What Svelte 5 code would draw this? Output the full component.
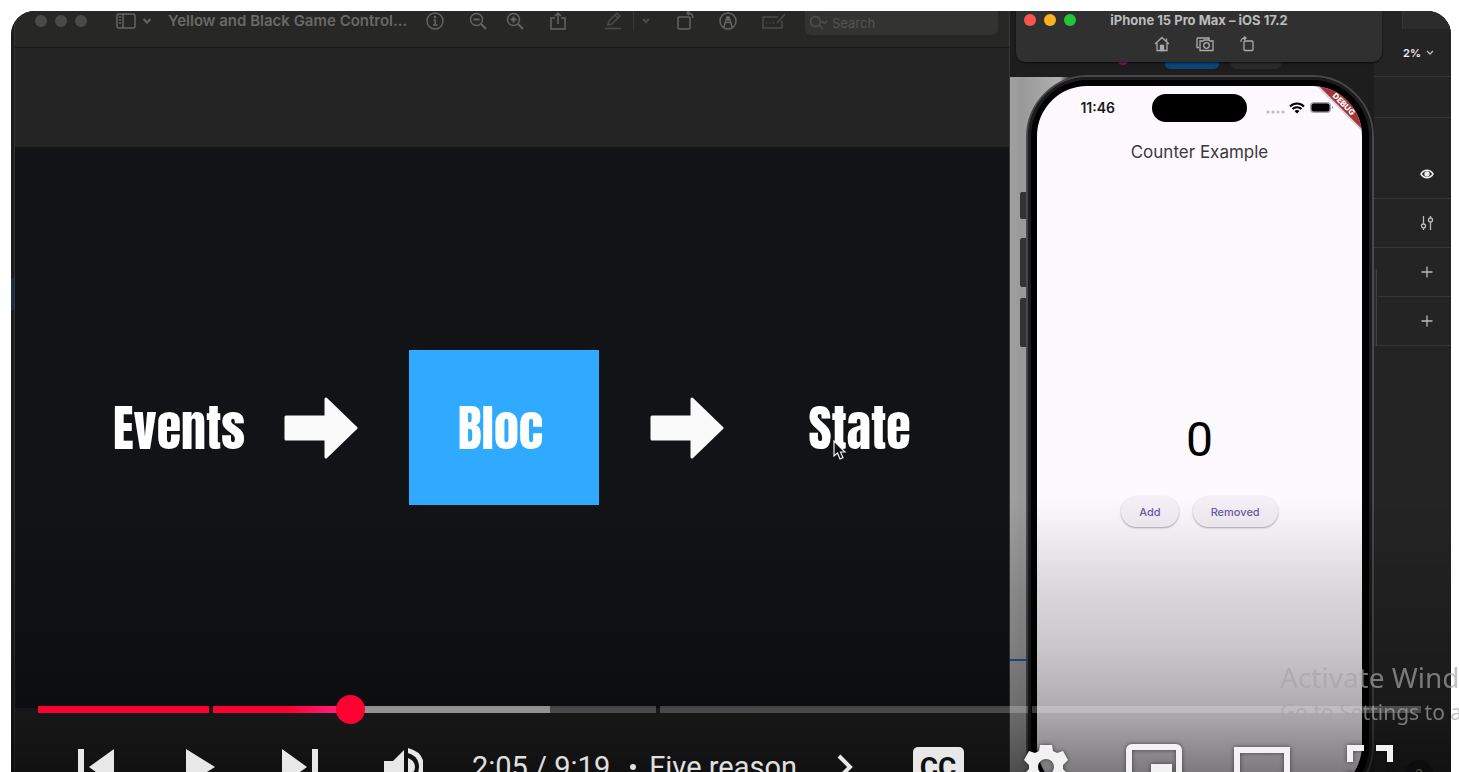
<script>
  const chapters = [
    { size: 171, played: 100, loaded: 100 },
    { size: 443, played: 31, loaded: 76, current: true },
    { size: 367, played: 0, loaded: 0 },
    { size: 389, played: 0, loaded: 0 }
  ];
</script>

<main class="player">
  <div class="video">
    <div class="edge"><i></i></div>

    <section class="preview" aria-label="Preview">
      <header class="titlebar">
        <div class="lights dim"><i></i><i></i><i></i></div>
        <button class="side" aria-label="Sidebar">
          <svg width="20" height="16" viewBox="0 0 20 16"><rect x="1" y="1" width="18" height="14" rx="2" /><path d="M7 1v14M3 4h2M3 7h2M3 10h2" /></svg>
          <svg width="10" height="8" viewBox="0 0 10 8"><path d="M1.500 2l3.500 3.500L8.500 2" stroke-width="2" /></svg>
        </button>
        <h1>Yellow and Black Game Control...</h1>
        <div class="tools">
          <button aria-label="Info"><svg width="20" height="20" viewBox="0 0 20 20"><circle cx="10" cy="10" r="8" /><path d="M8.500 9H10.200v5M8 14h4.500" /><circle cx="10" cy="6" r=".6" /></svg></button>
          <div class="zooms">
            <button aria-label="Zoom out"><svg width="20" height="20" viewBox="0 0 20 20"><circle cx="8.500" cy="8.500" r="6" /><path d="M5.500 8.500h6M13 13l5 5" stroke-width="2" /></svg></button>
            <button aria-label="Zoom in"><svg width="20" height="20" viewBox="0 0 20 20"><circle cx="8.500" cy="8.500" r="6" /><path d="M5.500 8.500h6M8.500 5.500v6M13 13l5 5" stroke-width="2" /></svg></button>
          </div>
          <button aria-label="Share"><svg width="20" height="20" viewBox="0 0 20 20"><path d="M7 7H3v11h14V7h-4M10 13V2M7 5l3-3 3 3" /></svg></button>
          <div class="pen">
            <button aria-label="Highlight"><svg width="20" height="20" viewBox="0 0 20 20"><path d="M2 17.500h16M5 14l1-4 8-8 3 3-8 8zM12 4l3 3" /></svg></button>
            <span></span>
            <button aria-label="Highlight colours"><svg width="8" height="8" viewBox="0 0 8 8"><path d="M1 2l3 3 3-3" stroke-width="2" /></svg></button>
          </div>
          <button aria-label="Rotate"><svg width="20" height="20" viewBox="0 0 20 20"><rect x="3" y="6" width="12" height="12" rx="1" /><path d="M12 2c4 0 6 1 6 5M14 0l-2 2 2 2" /></svg></button>
          <button aria-label="Markup"><svg width="20" height="20" viewBox="0 0 20 20"><circle cx="10" cy="10" r="8" /><path d="M6 16l3-10h2l3 10M8 12c1-1 3-1 4 0M10 6v4" /></svg></button>
          <button class="faint" aria-label="Form filling"><svg width="24" height="20" viewBox="0 0 24 20"><path d="M17 6H2v11h19v-7M5 12h1M8.500 12h1M12 12h1M16 12l8-9" /></svg></button>
        </div>
        <label class="search">
          <svg width="20" height="16" viewBox="0 0 20 16"><circle cx="6.500" cy="6.500" r="5" /><path d="M10 10l4 4M13 6l2.500 2.500L18 6" /></svg>
          <input type="text" placeholder="Search" aria-label="Search" />
        </label>
      </header>

      <div class="canvas"></div>

      <div class="slide">
        <strong class="events">Events</strong>
        <svg class="arrow" viewBox="0 0 74 62"><path d="M2 20H42V2L72 31 42 60V42H2z" /></svg>
        <div class="bloc"><strong>Bloc</strong></div>
        <svg class="arrow second" viewBox="0 0 74 62"><path d="M2 20H42V2L72 31 42 60V42H2z" /></svg>
        <div class="state">
          <strong>State</strong>
          <svg class="cursor" width="14" height="20" viewBox="0 0 14 20"><path d="M1 1v15l3.500-3 2.500 6 3-1.300-2.500-5.700H12z" /></svg>
        </div>
      </div>
    </section>

    <section class="stage" aria-label="Simulator">
      <div class="behind"><i class="pink"></i><i class="blue"></i><i class="grey"></i></div>
      <div class="rail"><i class="k1"></i><i></i><i></i><b></b></div>

      <div class="phone">
        <div class="screen">
          <div class="status">
            <time>11:46</time>
            <span class="island"></span>
            <svg width="68" height="16" viewBox="0 0 68 16">
              <g fill="#bdb9be"><circle cx="2" cy="12" r="1.500" /><circle cx="7" cy="12" r="1.500" /><circle cx="12" cy="12" r="1.500" /><circle cx="17" cy="12" r="1.500" /></g>
              <g fill="none" stroke="#000" stroke-width="2"><path d="M24 6.500c4-4 10-4 14 0M26.500 9c2.500-2.500 6.500-2.500 9 0" /></g>
              <path d="M28.500 11c1.500-1.300 3.500-1.300 5 0L31 13.500z" />
              <rect x="44" y="2" width="21" height="11" rx="4" fill="#aaa6ab" />
              <rect x="45.500" y="3.500" width="18" height="8" rx="2.500" /><path d="M66 6q2 1.500 0 3z" fill="#888" />
            </svg>
          </div>
          <h2>Counter Example</h2>
          <output>0</output>
          <div class="actions"><button>Add</button><button>Removed</button></div>
          <svg class="debug" width="46" height="46" viewBox="0 0 46 46">
            <path class="shade" d="M3 0H20L46 26V43z" /><path d="M3 0H20L46 26V43z" fill="#a5353b" />
            <text x="28" y="18" transform="rotate(45 28 18)" text-anchor="middle" dominant-baseline="central">DEBUG</text>
          </svg>
        </div>
      </div>

      <aside class="inspector">
        <div class="tabs"></div>
        <button class="scale">2%
          <svg width="8" height="8" viewBox="0 0 8 8"><path d="M1 2l3 3 3-3" /></svg>
        </button>
        <div class="blank"></div>
        <button class="row tall" aria-label="Visibility"><svg width="14" height="14" viewBox="0 0 14 14"><path d="M1 7c3-5 9-5 12 0-3 5-9 5-12 0z" stroke="#eee" stroke-width="1.500" /><circle cx="7" cy="7" r="2" fill="#eee" stroke="#eee" /></svg></button>
        <button class="row" aria-label="Adjust"><svg width="14" height="16" viewBox="0 0 14 16"><path d="M3.500 1v8M3.500 13v2M10.500 7v8M10.500 1v2" /><circle cx="3.500" cy="11" r="2" /><circle cx="10.500" cy="5" r="2" /></svg></button>
        <button class="row" aria-label="Add fill"><svg width="14" height="14" viewBox="0 0 14 14"><path d="M7 1.500v11M1.500 7h11" /></svg></button>
        <button class="row" aria-label="Add stroke"><svg width="14" height="14" viewBox="0 0 14 14"><path d="M7 1.500v11M1.500 7h11" /></svg></button>
        <span class="power"></span>
        <button class="help">?</button>
      </aside>

      <header class="simbar">
        <div class="simtitle">
          <div class="lights"><i></i><i></i><i></i></div>
          <h2>iPhone 15 Pro Max – iOS 17.2</h2>
        </div>
        <div class="simtools">
          <button aria-label="Home"><svg width="16" height="16" viewBox="0 0 16 16"><path d="M1 8l7-6.500L15 8M3 7v7.500h10V7M12.500 2.500v3" /><path d="M6.500 9.500h3v5h-3z" fill="#aaa" /></svg></button>
          <button aria-label="Screenshot"><svg width="18" height="16" viewBox="0 0 18 16"><path d="M3 11.500H1V3q0-1 1-1h11v2M4 5h3l1-1h5l1 1h3v9.500H4z" /><circle cx="10.500" cy="9.500" r="2.800" /></svg></button>
          <button aria-label="Rotate device"><svg width="16" height="16" viewBox="0 0 16 16"><rect x="4" y="5" width="9" height="9.500" rx="1" /><path d="M1 6c0-3 1-4 5-4M4 .5L6 2 4 4" /></svg></button>
        </div>
      </header>
    </section>
  </div>

  <div class="controls">
    <div class="progress">
      {#each chapters as c}
        <div class="chapter" style="flex-grow: {c.size}">
          <div class="loaded" style="width: {c.loaded}%"></div>
          <div class="played" class:live={c.current} style="width: {c.played}%"></div>
          {#if c.current}<div class="knob" style="left: {c.played}%"></div>{/if}
        </div>
      {/each}
    </div>
    <div class="buttons">
      <div class="left">
        <button aria-label="Previous"><svg width="36" height="36" viewBox="0 0 36 36"><path d="M0 0h6v36H0zM36 0v36L11 18z" /></svg></button>
        <button aria-label="Play"><svg width="36" height="36" viewBox="0 0 36 36"><path d="M6 0l29 18L6 36z" /></svg></button>
        <button aria-label="Next"><svg width="36" height="36" viewBox="0 0 36 36"><path d="M0 0l25 18L0 36zM30 0h6v36h-6z" /></svg></button>
        <button aria-label="Mute"><svg width="42" height="38" viewBox="-2 0 42 38"><path d="M1 13h9L21 2v34L10 25H1z" /><path d="M25 0q16 4 16 19T25 38v-5q11-3 11-14T25 5z" /><path d="M25 10q7 3 7 9t-7 9z" /></svg></button>
        <span class="time">2:05 / 9:19</span>
        <button class="name"><b></b>Five reason
          <svg width="16" height="26" viewBox="0 0 16 26"><path d="M2 2l11 11L2 24" fill="none" stroke="#e8e8e8" stroke-width="4" /></svg>
        </button>
      </div>
      <div class="right">
        <button aria-label="Captions"><span class="cc">CC</span></button>
        <button aria-label="Settings"><svg width="44" height="46" viewBox="0 0 44 46"><path fill-rule="evenodd" d="M16 1h12l1 6 4 2 6-2 5 9-5 5v4l5 5-5 9-6-2-4 2-1 6H16l-1-6-4-2-6 2-5-9 5-5v-4l-5-5 5-9 6 2 4-2zM22 15a8 8 0 1 0 0 16 8 8 0 0 0 0-16z" /></svg></button>
        <button aria-label="Miniplayer"><svg width="56" height="46" viewBox="0 0 56 46"><rect x="3" y="3" width="50" height="40" rx="3" fill="none" stroke="#f2f2f2" stroke-width="6" /><path d="M25 20h21v16H25z" /></svg></button>
        <button aria-label="Theater mode"><svg width="56" height="40" viewBox="0 0 56 40"><rect x="3" y="3" width="50" height="34" fill="none" stroke="#f2f2f2" stroke-width="6" /></svg></button>
        <button aria-label="Full screen"><svg width="46" height="44" viewBox="0 0 46 44"><path d="M0 0h17v6H6v11H0zM29 0h17v17h-6V6H29zM0 27h6v11h11v6H0zM40 27h6v17H29v-6h11z" /></svg></button>
      </div>
    </div>
  </div>
</main>

<div class="watermark"><p>Activate Wind</p><small>Go to Settings to a</small></div>

<style>
  :global(body) { background: #fff; overflow: hidden; }
  * { box-sizing: border-box; }
  h1, h2, p { margin: 0; }
  button { border: 0; padding: 0; margin: 0; background: none; color: inherit; font: inherit; display: flex; align-items: center; justify-content: center; }
  svg { display: block; flex: none; }
  i, b { display: block; }

  .player { position: relative; margin: 11px 8px 0 11px; height: calc(100vh + 20px); border-radius: 24px 24px 0 0; overflow: hidden; background: #1d1d1d; font-family: Inter, "Liberation Sans", sans-serif; }
  .video { display: grid; grid-template-columns: 4px 1fr 441px; height: 100%; }
  .edge { background: #1c1c1c; border-right: 1px solid #343434; padding-top: 267px; }
  .edge i { height: 32px; background: #12304c; }

  .preview { display: flex; flex-direction: column; background: #222; border-right: 1px solid #383838; min-width: 0; }
  .titlebar { display: flex; align-items: flex-start; height: 37px; padding: 0 11px 0 20px; background: #272725; border-bottom: 1px solid #141414; color: #696967; }
  .titlebar svg { fill: none; stroke: #646462; stroke-width: 1.5; }
  .titlebar > .lights, .side, .titlebar h1, .tools { height: 19px; }
  .lights { display: flex; gap: 8px; align-items: center; }
  .lights i { width: 12px; height: 12px; border-radius: 50%; background: #fe544d; }
  .lights i:nth-child(2) { background: #fdb125; }
  .lights i:nth-child(3) { background: #24c539; }
  .lights.dim i { background: #4a4a48; }
  .side { gap: 6px; margin-left: 29px; }
  .titlebar h1 { flex: 1; margin-left: 16px; font-size: 15px; font-weight: 600; line-height: 19px; white-space: nowrap; }
  .tools, .zooms, .pen { display: flex; align-items: center; }
  .tools { gap: 23px; margin-right: 20px; }
  .zooms { gap: 17px; }
  .pen { gap: 10px; padding: 0 2px 0 12px; opacity: .6; }
  .pen span { width: 1px; height: 20px; background: #444; margin-right: -2px; }
  .faint { opacity: .6; }
  .search { display: flex; align-items: center; gap: 3px; width: 193px; height: 24px; padding-left: 4px; background: #333331; border-radius: 0 0 6px 6px; }
  .search svg { stroke: #50504e; }
  .search input { border: 0; background: none; outline: 0; padding: 0; width: 120px; font: 13px/16px Inter, sans-serif; color: #555; }
  .search input::placeholder { color: #555553; opacity: 1; }
  .canvas { height: 99px; background: #242424; }

  .slide { aspect-ratio: 994 / 561; display: grid; grid-template-columns: 269fr 74fr 51fr 190fr 51fr 74fr 285fr; align-items: center; background: #121317; }
  .slide strong { font: 400 50px/60px Anton, Impact, "Liberation Sans Narrow", "DejaVu Sans Condensed", sans-serif; color: #fff; }
  .events { justify-self: end; padding-right: 39px; }
  .arrow { width: 100%; fill: #fafafa; stroke: #fafafa; stroke-width: 3; stroke-linejoin: round; }
  .bloc { grid-column: 4; height: 155px; background: #30aaff; display: flex; align-items: center; justify-content: center; padding-right: 7px; }
  .second { grid-column: 6; }
  .state { position: relative; justify-self: center; padding-right: 14px; }
  .cursor { position: absolute; left: 25px; top: 42px; fill: #111; stroke: #eee; stroke-width: 1.2; }

  .stage { position: relative; display: grid; grid-template-columns: 16px 348px 1fr; align-items: start; background: linear-gradient(90deg, #a0a0a0 0, #999 12px, #b0b0b0 50px, #1d1d1d 60px); }
  .behind { position: absolute; left: 0; right: 77px; top: 0; height: 66px; background: #1d1d1d; }
  .behind i { position: absolute; bottom: 8px; height: 24px; width: 54px; left: 155px; border-radius: 5px; background: #0c4479; }
  .behind .pink { width: 12px; height: 12px; left: 107px; bottom: 12px; border-radius: 50%; background: #8a1569; }
  .behind .grey { left: 221px; width: 50px; background: #2a2a2a; }
  .rail { padding: 181px 0 0 10px; display: flex; flex-direction: column; gap: 11px; }
  .rail i { height: 49px; background: #333; border-radius: 2px 0 0 2px; }
  .rail .k1 { height: 27px; margin-bottom: 8px; }
  .rail b { height: 2px; margin: 301px 0 0 -10px; background: #1f5b93; }
  .phone { position: relative; margin-top: 64px; padding: 9px 10px 11px 9px; background: #000; border: 2px solid #48484a; border-radius: 62px; box-shadow: inset 0 0 0 3px #1c1c1e; }
  .screen { position: relative; height: 709px; border-radius: 50px; overflow: hidden; background: #fdf9fe; display: flex; flex-direction: column; align-items: center; color: #3a383d; }
  .status { display: grid; grid-template-columns: 1fr 95px 1fr; align-items: center; width: 100%; padding-top: 8px; }
  .status time { justify-self: end; padding-right: 37px; font-size: 14px; font-weight: 600; line-height: 28px; color: #1a1a1a; }
  .island { height: 28px; border-radius: 14px; background: #000; }
  .status svg { margin-left: 19px; }
  .screen h2 { margin-top: 18px; font-size: 17px; font-weight: 400; line-height: 24px; }
  output { margin-top: 250px; font: 400 48px/52px Roboto, sans-serif; color: #000; }
  .actions { display: flex; gap: 14px; margin-top: 30px; }
  .actions button { height: 31px; padding: 0 18px; border-radius: 16px; background: #f5eff8; color: #6a5ca8; font-size: 11px; font-weight: 500; box-shadow: 0 1px 2px #0005; }
  .debug { position: absolute; right: 0; top: 0; }
  .debug text { fill: #fff; font: 800 8px Inter, sans-serif; }
  .shade { fill: #0003; stroke: #0002; stroke-width: 4; }

  .inspector { position: relative; height: 100%; background: #242424; color: #eee; }
  .inspector button { width: 100%; justify-content: flex-end; padding-right: 17px; }
  .inspector svg { fill: none; stroke: #bbb; stroke-width: 1.3; }
  .tabs { height: 18px; margin-left: 28px; background: #2c2c2c; border-left: 1px solid #383838; }
  .inspector .scale { height: 48px; gap: 5px; font-size: 11px; font-weight: 600; border-bottom: 1px solid #363636; }
  .blank { height: 41px; border-bottom: 1px solid #363636; }
  .inspector .row { height: 49px; border-bottom: 1px solid #363636; }
  .inspector .tall { height: 81px; padding-top: 32px; }
  .power { position: absolute; left: 0; top: 258px; width: 3px; height: 77px; background: #2c2c2c; border-right: 1px solid #404040; }
  .inspector .help { position: absolute; right: 18px; top: 749px; width: 28px; height: 28px; padding: 0; justify-content: center; border-radius: 50%; background: #181818; color: #aaa; font-size: 13px; }

  .simbar { position: absolute; left: 6px; top: 0; width: 366px; height: 51px; background: #303031; border-radius: 0 0 9px 9px; box-shadow: 0 1px 2px #000a; color: #bcbcbc; }
  .simtitle { display: grid; grid-template-columns: 1fr auto 1fr; align-items: center; padding-left: 8px; height: 18px; }
  .simtitle::after { content: ""; }
  .simbar h2 { font-size: 13px; font-weight: 700; line-height: 18px; padding-right: 8px; }
  .simtools { display: flex; justify-content: center; gap: 26px; padding: 7px 0 0 11px; }
  .simbar svg { fill: none; stroke: #aaa; stroke-width: 1.3; }

  .controls { position: absolute; inset: auto 0 0 0; height: 306px; padding: 209px 0 0; background: linear-gradient(#0000 0, #0000000d 35px, #00000024 95px, #00000033 150px, #00000047 195px, #00000058 225px, #00000082 275px, #000000a0 306px); }
  .progress { display: flex; gap: 4px; height: 7px; margin: 0 30px 0 27px; }
  .chapter { position: relative; flex: 0 1 0; background: #ffffff38; }
  .chapter div { position: absolute; left: 0; top: 0; height: 7px; }
  .loaded { background: #ffffff68; }
  .chapter .played { background: #ff0033; }
  .chapter .live { background: linear-gradient(90deg, #ff0033 55%, #ff2791); }
  .chapter .knob { width: 29px; height: 29px; top: -11px; margin-left: -15px; border-radius: 50%; background: #ff0033; }
  .buttons { display: flex; justify-content: space-between; height: 72px; margin-top: 18px; padding: 0 27px 0 34px; color: #e0e0e0; font: 29px/36px Roboto, sans-serif; }
  .left, .right { display: flex; align-items: center; }
  .left svg { fill: #e8e8e8; }
  .right svg { fill: #f2f2f2; filter: drop-shadow(0 0 2px #0008); }
  .left > button { width: 102px; }
  .time { margin-left: 19px; white-space: nowrap; }
  .left > .name { width: auto; margin-left: 20px; white-space: nowrap; }
  .name b { width: 6px; height: 6px; border-radius: 50%; background: #e0e0e0; margin-right: 13px; }
  .name svg { margin-left: 40px; }
  .right button { width: 108px; }
  .cc { width: 51px; height: 40px; border-radius: 5px; background: #e8e8e8; color: #111; font: 700 28px/42px Roboto, sans-serif; text-align: center; }

  .watermark { position: fixed; right: 0; top: 659px; width: 179px; overflow: hidden; white-space: nowrap; pointer-events: none; color: #a5a5a5b0; font-family: "Noto Sans", sans-serif; }
  .watermark p { font-size: 28px; line-height: 36px; }
  .watermark small { display: block; font-size: 21px; line-height: 34px; }
</style>
